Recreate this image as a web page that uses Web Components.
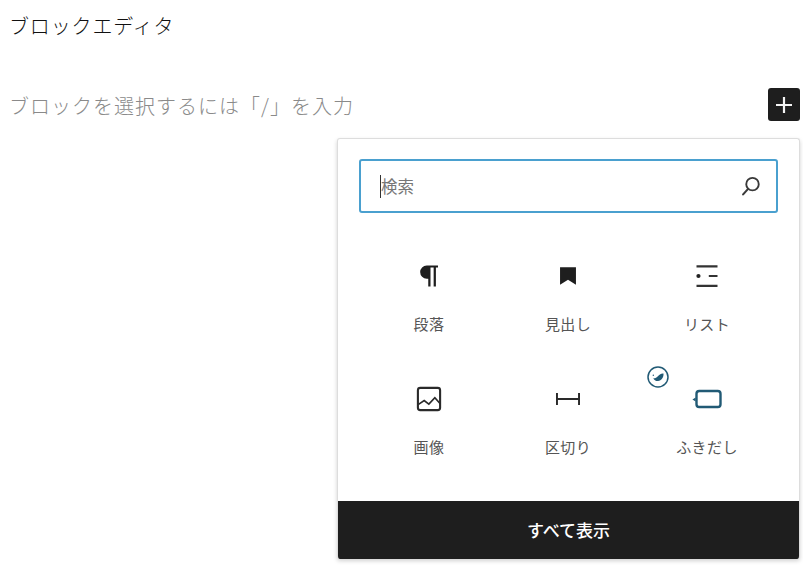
<!DOCTYPE html>
<html lang="ja"><head><meta charset="utf-8">
<style>
html,body{margin:0;padding:0;background:#fff;height:575px;overflow:hidden}
body{font-family:"Noto Sans CJK JP","Noto Sans",sans-serif;color:#1e1e1e}
</style></head><body>
<editor-page></editor-page>
<script>
const FONT='"Noto Sans CJK JP","Noto Sans",sans-serif';
const icons={
 para:'<path fill="#1e1e1e" d="M18 5H10.500a4.400 4.400 0 0 0 0 8.800h1V19h1.500V6.400h2.100V19h1.500V6.400H18z"/>',
 head:'<path fill="#1e1e1e" d="M6.700 6.200h10.600v11.600L12 14.500l-5.300 3.300z"/>',
 list:'<path fill="#333" d="M5 4.800h14v1.500H5zM5 17.800h14v1.500H5zM13.200 11.300H19v1.400h-5.800z"/><circle cx="6.300" cy="12" r="1.400" fill="#222"/>',
 image:'<rect x="4.600" y="4.600" width="14.800" height="14.800" rx="1.600" fill="none" stroke="#2a2a2a" stroke-width="1.400"/><path fill="none" stroke="#2a2a2a" stroke-width="1.100" d="M4.500 15.900L8.800 13l3.100 2.400 4-4.300 3.600 4.100"/>',
 sep:'<path fill="#2a2a2a" d="M4 8h1.300v8H4zM18.700 8H20v8h-1.300zM5.300 11.350h13.400v1.300H5.300z"/>',
 bubble:'<rect x="5" y="6.700" width="16" height="10.600" rx="1.800" fill="none" stroke="#215a75" stroke-width="1.600"/><path fill="#215a75" d="M4.400 11v2.600l-2.100-1.300z"/>'
};
class BlockTile extends HTMLElement{
 constructor(){super();const s=this.attachShadow({mode:'open'});
 s.innerHTML=`<style>
 :host{display:flex;flex-direction:column;align-items:center;width:139px;height:123px;position:relative}
 .i{width:36px;height:36px;margin-top:19.500px;display:block;flex:none}
 .l{margin-top:20.500px;font:15px/20px ${FONT};color:#555;letter-spacing:.4px;white-space:nowrap}
 .badge{position:absolute;left:9px;top:5px;width:22px;height:22px}
 </style>
 <svg class="i" viewBox="0 0 24 24">${icons[this.getAttribute('icon')]}</svg>
 <span class="l"><slot></slot></span>
 ${this.hasAttribute('badge')?`<svg class="badge" viewBox="0 0 22 22"><circle cx="11" cy="11" r="10" fill="#fff" stroke="#215a75" stroke-width="1.500"/><path fill="#215a75" d="M6.300 12.300c1.800.3 3-.5 4.300-1.800 1.400-1.500 3.400-3.300 5.900-3 .3 3.700-2 7.300-5.500 7.600-2.100.2-3.800-.9-4.700-2.800z"/><circle cx="6.300" cy="9.300" r=".7" fill="#215a75"/></svg>`:''}`;}
}
customElements.define('block-tile',BlockTile);
class SearchBox extends HTMLElement{
 constructor(){super();this.attachShadow({mode:'open'}).innerHTML=`<style>
 :host{display:flex;align-items:center;box-sizing:border-box;height:54px;border:2px solid #4aa0cf;border-radius:3px;padding:0 10px 0 19px}
 .caret{width:1px;height:23px;background:#333;flex:none}
 .t{flex:1;font:16.500px/24px ${FONT};color:#777}
 svg{width:30px;height:30px;flex:none}
 </style><span class="caret"></span><span class="t">検索</span>
 <svg viewBox="0 0 24 24"><circle cx="13.200" cy="10.500" r="5" fill="none" stroke="#3a3a3a" stroke-width="1.500"/><path stroke="#3a3a3a" stroke-width="1.700" stroke-linecap="round" d="M9.500 14.500l-3.800 4.200"/></svg>`;}
}
customElements.define('search-box',SearchBox);
class InserterPopup extends HTMLElement{
 constructor(){super();this.attachShadow({mode:'open'}).innerHTML=`<style>
 :host{position:absolute;left:337px;top:138px;width:463px;height:421px;box-sizing:border-box;display:flex;flex-direction:column;background:#fff;border:1px solid #ddd;border-bottom:0;border-radius:3px;box-shadow:0 2px 4px rgba(0,0,0,.18);overflow:hidden}
 .s{padding:20px 21px 0}
 .g{display:grid;grid-template-columns:repeat(3,139px);grid-auto-rows:123px;padding:25px 0 0 21.500px;flex:1}
 .f{height:58px;background:#1e1e1e;color:#fff;display:flex;align-items:center;justify-content:center;font:500 17px/24px ${FONT}}
 </style><div class="s"><search-box></search-box></div>
 <div class="g">
 <block-tile icon="para">段落</block-tile><block-tile icon="head">見出し</block-tile><block-tile icon="list">リスト</block-tile>
 <block-tile icon="image">画像</block-tile><block-tile icon="sep">区切り</block-tile><block-tile icon="bubble" badge>ふきだし</block-tile>
 </div><div class="f">すべて表示</div>`;}
}
customElements.define('inserter-popup',InserterPopup);
class EditorPage extends HTMLElement{
 constructor(){super();this.attachShadow({mode:'open'}).innerHTML=`<style>
 :host{display:block;padding:12px 3px 0 9px;height:575px;box-sizing:border-box}
 h1{margin:0;font:300 20px/28px ${FONT};color:#111;letter-spacing:.85px}
 .r{display:flex;align-items:center;justify-content:space-between;margin-top:48px}
 .p{font:300 20px/30px ${FONT};color:#8a8a8a;letter-spacing:1px;position:relative;top:1px}
 .b{width:32px;height:33px;background:#1e1e1e;border-radius:3px;display:flex;align-items:center;justify-content:center}
 .b svg{width:24px;height:24px}
 </style><h1>ブロックエディタ</h1>
 <div class="r"><span class="p">ブロックを選択するには「/」を入力</span><div class="b"><svg viewBox="0 0 24 24"><path fill="#f4f4f4" d="M10.900 4h2.200v6.900H20v2.200h-6.900V20h-2.200v-6.900H4v-2.200h6.900z"/></svg></div></div>
 <inserter-popup></inserter-popup>`;}
}
customElements.define('editor-page',EditorPage);
</script></body></html>
